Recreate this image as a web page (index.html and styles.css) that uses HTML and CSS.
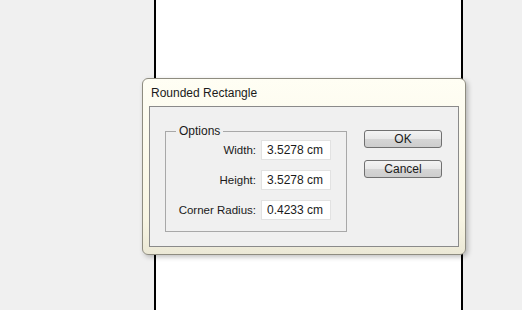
FILE: index.html
```html
<!DOCTYPE html>
<html lang="en">
<head>
  <meta charset="utf-8">
  <title>Rounded Rectangle</title>
  <link rel="stylesheet" href="styles.css">
</head>
<body>
<div class="artboard"></div>

<div class="dialog">
  <div class="title">Rounded Rectangle</div>
  <div class="panel">
    <fieldset class="options">
      <legend>Options</legend>
      <label for="w">Width:</label>
      <input id="w" type="text" value="3.5278 cm">
      <label for="h">Height:</label>
      <input id="h" type="text" value="3.5278 cm">
      <label for="r">Corner Radius:</label>
      <input id="r" type="text" value="0.4233 cm">
    </fieldset>
    <div class="buttons">
      <button>OK</button>
      <button>Cancel</button>
    </div>
  </div>
</div>
</body>
</html>
```

FILE: styles.css
```css
body {
  margin: 0;
  height: 310px;
  overflow: hidden;
  background: #f0f0f0;
  font-family: "Liberation Sans", Arial, sans-serif;
  font-size: 11px;
  color: #000;
}

.artboard {
  margin-left: 154px;
  width: 305px;
  height: 310px;
  background: #fff;
  border-left: 2px solid #000;
  border-right: 2px solid #000;
}

/* the dialog floats over the artboard */
.dialog {
  position: absolute;
  left: 142px;
  top: 78px;
  width: 322px;
  height: 175px;
  border: 1px solid #8e8c80;
  border-radius: 6px;
  background: linear-gradient(#fffef4, #f8f5e3 80%, #ebe8d6);
  box-shadow: 2px 2px 5px rgba(0, 0, 0, 0.25);
}

.title {
  height: 27px;
  padding-left: 8px;
  line-height: 29px;
  font-size: 12px;
  color: #1a1a1a;
}

.panel {
  display: flex;
  margin: 0 6px 0 6px;
  height: 141px;
  padding: 17px 0 0 15px;
  box-sizing: border-box;
  background: #f0f0f0;
  border: 1px solid #8a8a8a;
}

.options {
  display: grid;
  grid-template-columns: auto 70px;
  justify-content: end;
  align-content: start;
  align-items: center;
  column-gap: 5px;
  row-gap: 10px;
  width: 182px;
  height: 108px;
  box-sizing: border-box;
  margin: 0;
  padding: 2px 15px 0 10px;
  border: 1px solid #a8a8a8;
}

.options legend {
  margin-left: 0;
  padding: 0 3px;
  font-size: 12px;
  color: #1a1a1a;
}

.options label {
  justify-self: end;
  font-size: 11.5px;
  color: #1a1a1a;
}

.options input {
  width: 70px;
  height: 20px;
  box-sizing: border-box;
  margin: 0;
  padding: 0 0 0 5px;
  border: 1px solid #e2e2e2;
  background: #fff;
  font-family: inherit;
  font-size: 12px;
  color: #1a1a1a;
}

.buttons {
  display: flex;
  flex-direction: column;
  gap: 12px;
  margin: 6px 0 0 17px;
}

.buttons button {
  width: 78px;
  height: 18px;
  padding: 0;
  border: 1px solid #707070;
  border-radius: 3px;
  background: linear-gradient(#f4f4f4, #e8e8e8 50%, #d6d6d6 51%, #cdcdcd);
  font-family: inherit;
  font-size: 12px;
  color: #1a1a1a;
}
```
